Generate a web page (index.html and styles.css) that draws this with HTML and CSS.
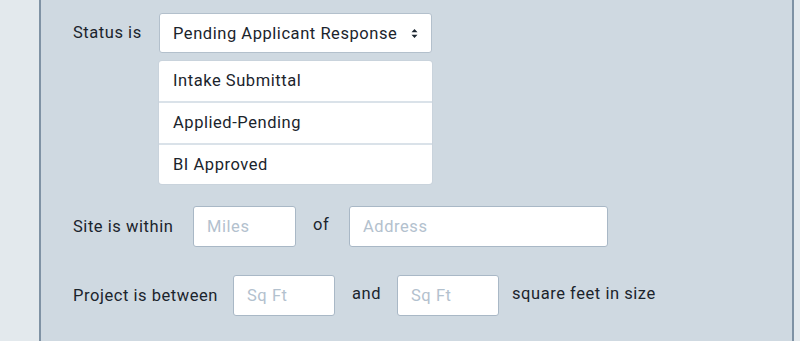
FILE: index.html
```html
<!DOCTYPE html>
<html>
<head>
<meta charset="utf-8">
<link rel="stylesheet" href="styles.css">
</head>
<body>
<div class="panel">
  <div class="row row-status">
    <span class="label label-status">Status is</span>
    <div class="status-col">
      <div class="select">
        <span>Pending Applicant Response</span>
        <svg class="arrows" width="7" height="11" viewBox="0 0 7 11"><path d="M0.5 4.2 L3.5 1 L6.5 4.2 Z M0.5 6.8 L3.5 10 L6.5 6.8 Z" fill="#1c2731"/></svg>
      </div>
      <ul class="options">
        <li>Intake Submittal</li>
        <li>Applied-Pending</li>
        <li>BI Approved</li>
      </ul>
    </div>
  </div>
  <div class="row row-site">
    <span class="label label-site">Site is within</span>
    <div class="input input-miles">Miles</div>
    <span class="joiner joiner-of">of</span>
    <div class="input input-address">Address</div>
  </div>
  <div class="row row-project">
    <span class="label label-project">Project is between</span>
    <div class="input input-sqft">Sq Ft</div>
    <span class="joiner joiner-and">and</span>
    <div class="input input-sqft">Sq Ft</div>
    <span class="suffix">square feet in size</span>
  </div>
</div>
</body>
</html>
```

FILE: styles.css
```css
html, body {
  margin: 0;
  padding: 0;
  height: 100%;
  overflow: hidden;
}
body {
  background: #e3e9ed;
  font-family: Roboto, "Noto Sans", sans-serif;
  font-size: 16.5px;
  letter-spacing: 0.55px;
  color: #1b242c;
}
.panel {
  margin-left: 39px;
  width: 719px;
  height: 100%;
  background: #cfd9e1;
  border-left: 2px solid #7f92a4;
  border-right: 2px solid #7f92a4;
  padding: 13px 0 0 32px;
  box-sizing: content-box;
}
.row {
  display: flex;
  align-items: center;
}
.row-status {
  align-items: flex-start;
}
.label {
  flex: none;
  white-space: nowrap;
}
.label-status {
  line-height: 40px;
  width: 86px;
}
.label-site { width: 120px; }
.label-project { width: 160px; }
.status-col {
  display: flex;
  flex-direction: column;
  width: 273px;
}
.select {
  height: 40px;
  box-sizing: border-box;
  background: #fff;
  border: 1px solid #b3c0cc;
  border-radius: 3px;
  display: flex;
  align-items: center;
  justify-content: space-between;
  padding: 0 13px 0 13px;
  white-space: nowrap;
}
.arrows {
  display: block;
  flex: none;
}
.options {
  list-style: none;
  margin: 8px 0 0;
  padding: 0;
  background: #fff;
  border-radius: 3px;
  box-shadow: 0 0 0 1px #c9d3dc;
}
.options li {
  height: 40px;
  line-height: 40px;
  padding-left: 14px;
  border-bottom: 2px solid #dae2e9;
}
.options li:last-child {
  border-bottom: none;
  height: 39px;
}
.row-site {
  margin-top: 22px;
}
.row-project {
  margin-top: 28px;
}
.input {
  height: 41px;
  box-sizing: border-box;
  background: #fff;
  border: 1px solid #a9b8c6;
  border-radius: 3px;
  color: #b3c1ce;
  padding-left: 13px;
  display: flex;
  align-items: center;
  flex: none;
}
.input-miles { width: 103px; }
.input-address { width: 259px; }
.input-sqft { width: 102px; }
.joiner {
  position: relative;
  top: -2px;
  flex: none;
}
.joiner-of { width: 36px; padding-left: 17px; }
.joiner-and { width: 45px; padding-left: 17px; }
.suffix {
  margin-left: 13px;
  position: relative;
  top: -2px;
  white-space: nowrap;
}
```
